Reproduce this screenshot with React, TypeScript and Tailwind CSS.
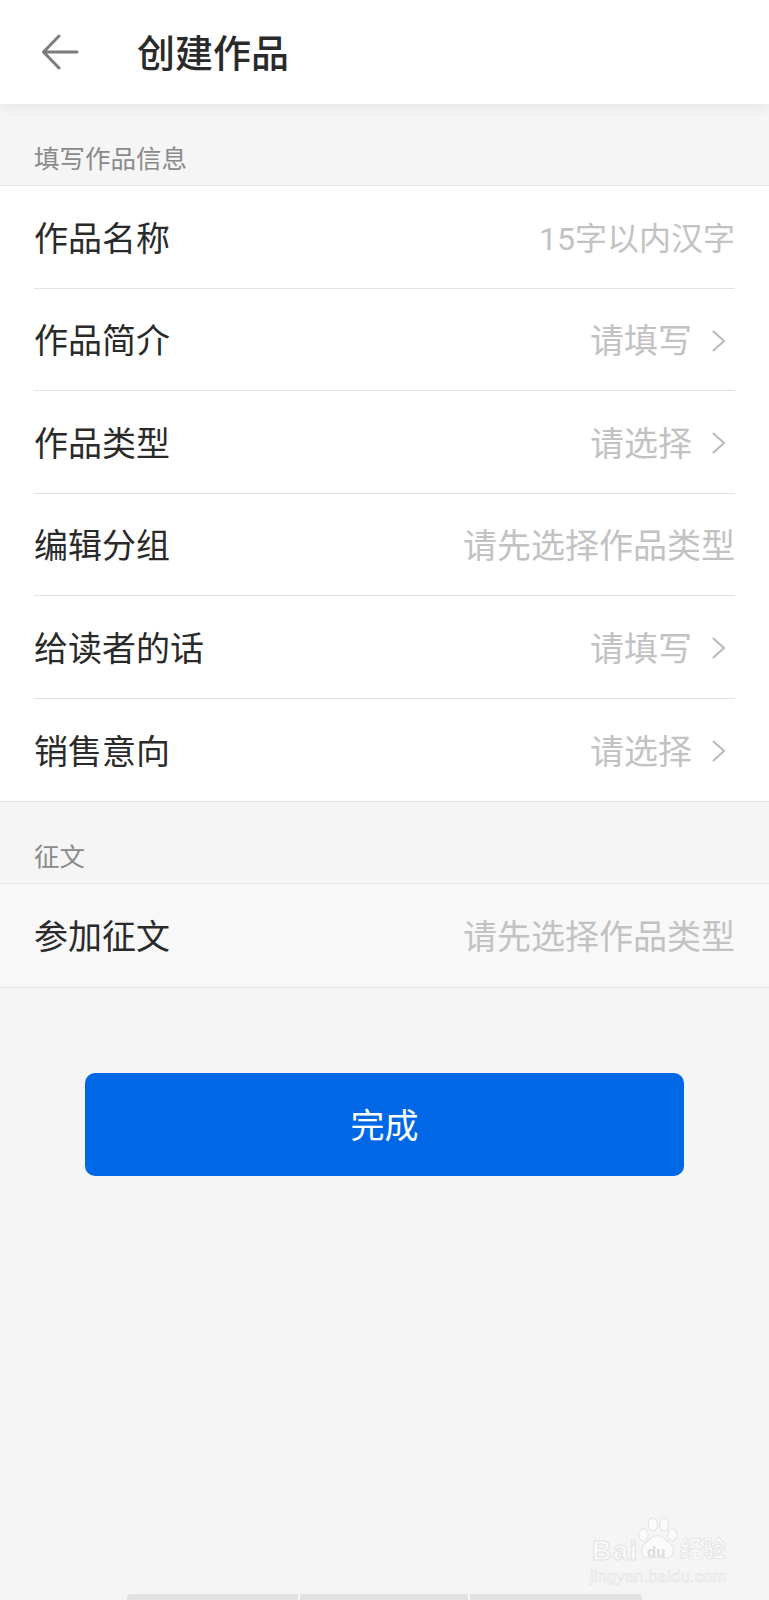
const FONT = "font-['Roboto','Noto_Sans_CJK_SC',sans-serif]";

function Chevron() {
  return (
    <svg width="16" height="24" viewBox="0 0 16 24" fill="none" className="ml-[19px] mr-[8px] -translate-y-[1px]">
      <path d="M2.5 2.5 L13 12 L2.5 21.5" stroke="#b9b9b9" strokeWidth="2" strokeLinecap="round" strokeLinejoin="round" />
    </svg>
  );
}

function Row({ label, hint, hintClass, arrow, last }: { label: string; hint: string; hintClass?: string; arrow?: boolean; last?: boolean }) {
  return (
    <div className={`mx-[34px] h-[102.5px] pt-[5px] flex items-center justify-between ${last ? "" : "border-b border-[#e2e2e2]"}`}>
      <span className="text-[34px] text-[#2a2a2a]">{label}</span>
      <span className="flex items-center">
        <span className={hintClass ?? "text-[34px] text-[#c2c2c2]"}>{hint}</span>
        {arrow && <Chevron />}
      </span>
    </div>
  );
}

function Watermark() {
  return (
    <div className="absolute left-[590px] top-[1514px] w-[140px] h-[70px] text-[#fbfbfb]">
      <svg width="41" height="45" viewBox="0 0 44 46" className="absolute left-[47px] top-[2px]" fill="none" stroke="#e4e4e4" strokeWidth="1.2">
        <ellipse cx="7" cy="19" rx="5" ry="6.500" fill="#fbfbfb" />
        <ellipse cx="17" cy="8" rx="5" ry="7" fill="#fbfbfb" />
        <ellipse cx="29" cy="8" rx="5" ry="7" fill="#fbfbfb" />
        <ellipse cx="38" cy="19" rx="5" ry="6.500" fill="#fbfbfb" />
        <path d="M22 20c-6 0-8 4-13 8-6 4-6 17 6 16 3-.2 5-1 7-1s4 .8 7 1c12 1 12-12 6-16-5-4-7-8-13-8z" fill="#fbfbfb" />
      </svg>
      <span className="absolute left-[2px] top-[22px] text-[27px] leading-[30px] tracking-[1.500px] font-bold font-['Liberation_Sans',sans-serif] [-webkit-text-stroke:1px_#e2e2e2]">Bai</span>
      <span className="absolute left-[57px] top-[30px] text-[15px] leading-[16px] font-bold text-[#dcdcdc] font-['Liberation_Sans',sans-serif]">du</span>
      <span className="absolute left-[90px] top-[23px] text-[23px] leading-[26px] font-bold whitespace-nowrap [-webkit-text-stroke:0.7px_#e2e2e2]">经验</span>
      <span className="absolute left-0 top-[52px] text-[16.500px] leading-[20px] tracking-[0.2px] font-['Liberation_Sans',sans-serif] [-webkit-text-stroke:0.6px_#e2e2e2] whitespace-nowrap">
        jingyan.baidu.com
      </span>
    </div>
  );
}

export default function App() {
  return (
    <div className={`relative w-[769px] h-[1600px] overflow-hidden bg-[#f5f5f5] ${FONT}`}>
      {/* header */}
      <div className="relative h-[104px] bg-white flex items-center pl-[41px] shadow-[0_2px_14px_rgba(0,0,0,0.07)]">
        <svg width="38" height="36" viewBox="0 0 38 36" fill="none">
          <path d="M36 18 H3 M18 2 L2.500 18 L18 34" stroke="#7b7b7b" strokeWidth="3" strokeLinecap="round" strokeLinejoin="round" />
        </svg>
        <span className="ml-[58px] pt-[5px] text-[38px] font-medium text-[#2a2a2a]">创建作品</span>
      </div>

      <div className="h-[81px] flex items-end pl-[34px] pb-[7px] text-[25.500px] leading-[38px] text-[#8a8a8a]">填写作品信息</div>

      <div className="bg-white border-y border-[#e4e4e4]">
        <Row label="作品名称" hint="15字以内汉字" hintClass="text-[32px] text-[#c2c2c2]" />
        <Row label="作品简介" hint="请填写" arrow />
        <Row label="作品类型" hint="请选择" arrow />
        <Row label="编辑分组" hint="请先选择作品类型" />
        <Row label="给读者的话" hint="请填写" arrow />
        <Row label="销售意向" hint="请选择" arrow last />
      </div>

      <div className="h-[81px] flex items-end pl-[34px] pb-[7px] text-[25.500px] leading-[38px] text-[#8a8a8a]">征文</div>

      <div className="bg-[#f8f8f8] border-y border-[#e4e4e4]">
        <Row label="参加征文" hint="请先选择作品类型" last />
      </div>

      <div className="mt-[85px] mx-[85px] h-[103px] pt-[4px] rounded-[10px] bg-[#0068e6] flex items-center justify-center text-[34px] text-white">
        完成
      </div>

      <Watermark />

      {/* cut-off bar at the bottom edge */}
      <div className="absolute left-[127px] top-[1594px] w-[515px] h-[6px] flex gap-[2px] rounded-t-[4px] overflow-hidden">
        <div className="w-[171px] bg-[#e2e2e2]" />
        <div className="w-[168px] bg-[#e2e2e2]" />
        <div className="flex-1 bg-[#e2e2e2]" />
      </div>
    </div>
  );
}
